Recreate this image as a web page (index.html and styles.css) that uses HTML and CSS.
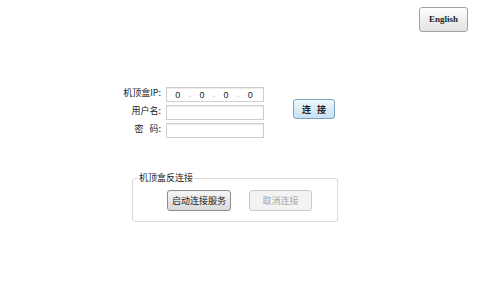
FILE: index.html
```html
<!DOCTYPE html>
<html lang="zh-CN">
<head>
  <meta charset="UTF-8" />
  <meta name="viewport" content="width=device-width, initial-scale=1.0"/>
  <title>机顶盒连接</title>
  <link rel="stylesheet" href="styles.css">
</head>
<body>

  <!-- 语言切换 -->
  <div class="topbar">
    <button class="btn btn-lang">English</button>
  </div>

  <!-- 连接表单 -->
  <div class="form">
    <label class="label">机顶盒IP:</label>
    <div class="field ip">
      <span>0</span><span class="dot">.</span>
      <span>0</span><span class="dot">.</span>
      <span>0</span><span class="dot">.</span>
      <span>0</span>
    </div>
    <button class="btn btn-connect">连<span class="gap"></span>接</button>

    <label class="label">用户名:</label>
    <div class="field"></div>

    <label class="label">密&nbsp;&nbsp;&nbsp;码:</label>
    <div class="field"></div>
  </div>

  <!-- 反连接 -->
  <fieldset class="reverse">
    <legend>机顶盒反连接</legend>
    <div class="actions">
      <button class="btn btn-start">启动连接服务</button>
      <button class="btn btn-cancel" disabled>取消连接</button>
    </div>
  </fieldset>

</body>
</html>
```

FILE: styles.css
```css
body {
  margin: 0;
  background: #fff;
  font-family: "Noto Sans CJK SC", "Liberation Sans", sans-serif;
  font-size: 9px;
  color: #222;
}

/* 공통 버튼 */
.btn {
  font-family: inherit;
  font-size: 9px;
  padding: 0;
  border-radius: 3px;
  color: #222;
  line-height: 1;
}

/* 상단 영역 */
.topbar {
  display: flex;
  justify-content: flex-end;
  padding: 7px 32px 0 0;
}

.btn-lang {
  width: 49px;
  height: 25px;
  font-family: "Liberation Serif", serif;
  font-weight: bold;
  border: 1px solid #a2a2a2;
  background: linear-gradient(#fdfdfd, #e2e2e2);
}

/* 입력 폼 */
.form {
  display: grid;
  grid-template-columns: 41px 98px 42px;
  grid-auto-rows: 15px;
  column-gap: 5px;
  row-gap: 3px;
  margin: 55px 0 0 120px;
}

.label {
  text-align: right;
  line-height: 12px;
  color: #222;
}

.field {
  border: 1px solid #cdcdcd;
  box-shadow: inset 0 1px 1px #ececec;
  background: #fff;
}

.ip {
  display: flex;
  justify-content: space-around;
  align-items: center;
  padding: 0 6px 0 4px;
  font-family: "Liberation Sans", sans-serif;
  font-size: 9px;
}

.ip .dot {
  color: #888;
  font-size: 8px;
}

.btn-connect {
  grid-column: 3;
  grid-row: 1 / span 2;
  align-self: end;
  margin: 0 0 1px 24px;
  width: 42px;
  height: 20px;
  font-weight: bold;
  border: 1px solid #7fa3bf;
  background: linear-gradient(#eef7fd, #c6e1f3);
}

.btn-connect .gap {
  display: inline-block;
  width: 6px;
}

/* 반연결 박스 */
.reverse {
  width: 206px;
  box-sizing: border-box;
  margin: 35px 0 0 132px;
  padding: 7px 0 10px 4px;
  border: 1px solid #dcdcdc;
  border-radius: 3px;
}

.reverse legend {
  padding: 0 1px;
  margin-left: 1px;
  line-height: 10px;
  color: #222;
}

.actions {
  display: flex;
  gap: 18px;
  padding-left: 30px;
}

.btn-start {
  width: 64px;
  height: 21px;
  border: 1px solid #8d8d8d;
  background: linear-gradient(#f6f6f6, #d9d9d9);
}

.btn-cancel {
  width: 63px;
  height: 21px;
  color: #a5a5a5;
  border: 1px solid #cacaca;
  background: #f3f3f3;
}
```
